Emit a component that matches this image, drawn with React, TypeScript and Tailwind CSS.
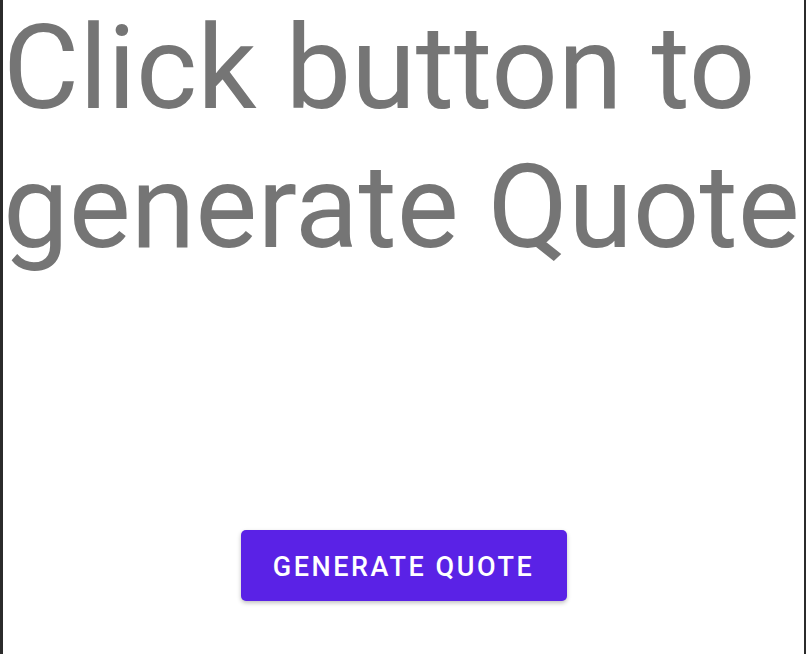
import React from "react";

export default function App() {
  return (
    <div className="w-[806px] h-[654px] bg-white border-l-[3px] border-r-[2px] border-[#2b2b2b] flex flex-col overflow-hidden">
      <p
        className="text-[117px] leading-[139px] text-[#757575] m-0 -mt-[1px] whitespace-nowrap"
        style={{ fontFamily: "Roboto, 'Noto Sans', sans-serif" }}
      >
        Click button to
        <br />
        generate Quote
      </p>
      <div className="flex justify-center mt-[253px]">
        <button
          className="w-[326px] h-[71px] pt-[4px] rounded-[5px] bg-[#5a22e6] text-white text-[27px] font-medium tracking-[0.095em] shadow-[0_2px_4px_rgba(0,0,0,0.25)] flex items-center justify-center"
          style={{ fontFamily: "Roboto, 'Noto Sans', sans-serif" }}
        >
          GENERATE QUOTE
        </button>
      </div>
    </div>
  );
}
